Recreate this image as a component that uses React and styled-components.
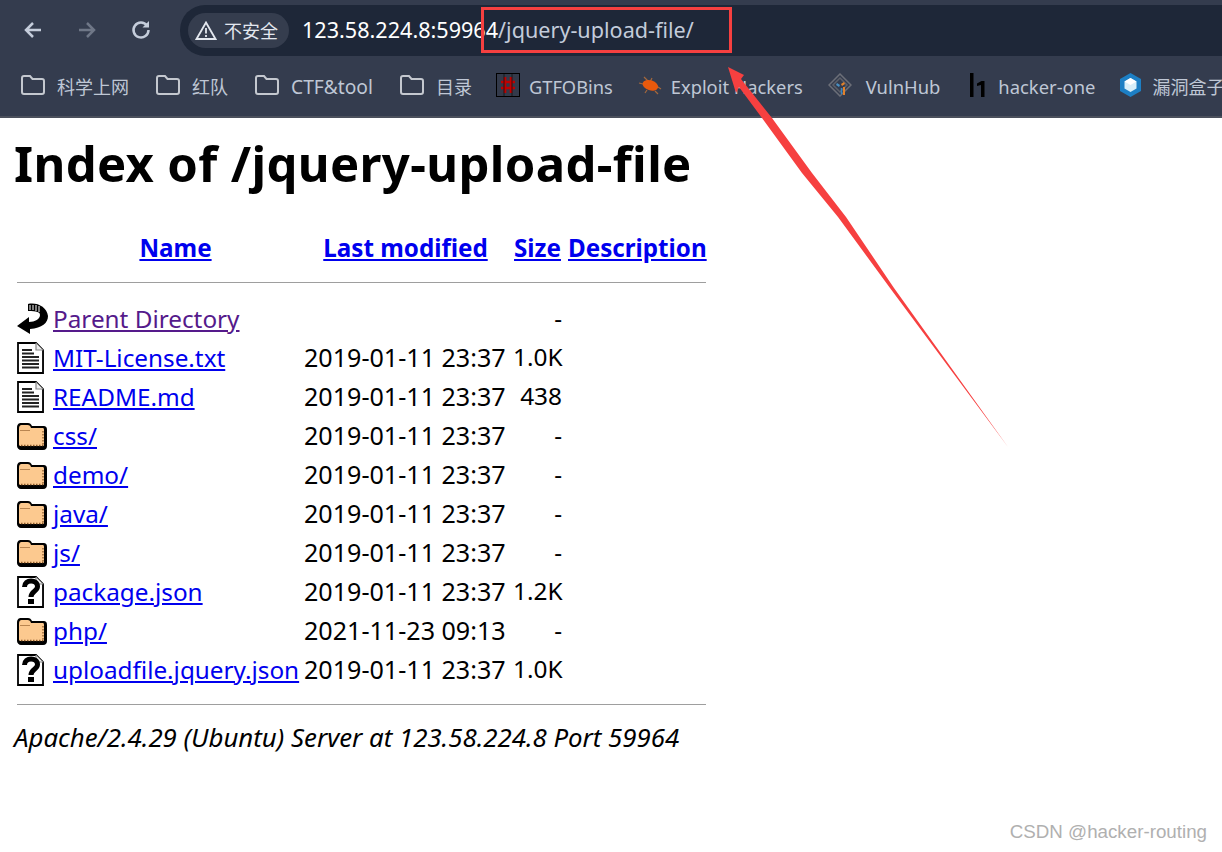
import React from 'react'
import styled, { createGlobalStyle } from 'styled-components'

const sans = '"Noto Sans", "Noto Sans CJK SC", "Open Sans", sans-serif'

const GlobalStyle = createGlobalStyle`
    html, body {
        margin: 0;
        padding: 0;
        background: #fff;
        font-family: ${sans};
    }
`

const Page = styled.div`
    position: relative;
    width: 1222px;
    height: 852px;
    overflow: hidden;
    background: #fff;
`

const Toolbar = styled.div`
    display: flex;
    align-items: stretch;
    height: 56px;
    padding-top: 5px;
    box-sizing: border-box;
    background: #343c4e;
`

const NavButtons = styled.div`
    display: flex;
    align-items: center;
    gap: 36px;
    width: 180px;
    padding: 0 0 1px 24px;
    box-sizing: border-box;
    flex-shrink: 0;
`

const NavIcon = styled.svg`
    width: 18px;
    height: 18px;
    fill: none;
    overflow: visible;
    stroke: ${p => (p.$disabled ? '#6f7787' : '#c5cddb')};
    stroke-width: 2.5;
`

const UrlBar = styled.div`
    flex: 1;
    display: flex;
    align-items: center;
    padding-left: 8px;
    background: #1e2738;
    border-radius: 25px 0 0 25px;
`

const SecurityPill = styled.div`
    display: flex;
    align-items: center;
    gap: 7px;
    height: 35px;
    width: 101px;
    padding-left: 7px;
    box-sizing: border-box;
    background: #353d4e;
    border-radius: 18px;
    color: #e3e7ee;
    font-size: 18px;
    white-space: nowrap;
`

const PillText = styled.span`
    padding-bottom: 2px;
`

const Url = styled.div`
    margin-left: 13px;
    padding-bottom: 2px;
    font-size: 21.6px;
    color: #c3ccdb;
    white-space: nowrap;
    b {
        font-weight: 400;
        color: #fff;
    }
`

const BookmarkBar = styled.div`
    display: flex;
    align-items: center;
    gap: 27px;
    height: 62px;
    padding: 0 0 2px 21px;
    box-sizing: border-box;
    background: #343c4e;
    border-bottom: 2px solid #4b505c;
    overflow: hidden;
`

const Bookmark = styled.div`
    display: flex;
    align-items: center;
    gap: ${p => p.$gap || 12}px;
    margin-left: ${p => p.$nudge || 0}px;
    flex-shrink: 0;
    color: #bfc7d5;
    font-size: ${p => p.$size || 18}px;
    white-space: nowrap;
`

const BookmarkLabel = styled.span`
    padding-top: 2px;
`

const Content = styled.div`
    color: #000;
`

const Title = styled.h1`
    margin: 0;
    padding: 12px 0 31px 14px;
    font-size: 49px;
    line-height: 66px;
    letter-spacing: 0.36px;
    font-weight: 700;
    white-space: nowrap;
`

const Listing = styled.table`
    margin-left: 14px;
    width: 698px;
    table-layout: fixed;
    border-collapse: collapse;
    font-size: 25.1px;
    white-space: nowrap;
    th, td {
        padding: 0 6px 0 0;
        height: 39px;
    }
    a {
        color: #0000ee;
        text-decoration: underline;
        font-size: 24.3px;
    }
`

const HeadLink = styled.a`
    font-weight: 700;
    && {
        font-size: 24.2px;
    }
`

const DirLink = styled.a`
    && {
        color: #551a8b;
    }
`

const IconCell = styled.td`
    && {
        height: 37px;
        padding: 2px 0 0 3px;
        line-height: 0;
    }
`

const SizeCell = styled.td`
    text-align: right;
    font-size: 24.4px;
`

const RuleCell = styled.th`
    && {
        height: ${p => p.$height}px;
        padding: 0 6px 0 3px;
    }
`

const Rule = styled.hr`
    margin: 0;
    border: 0;
    border-top: 1px solid #9e9e9e;
`

const Signature = styled.address`
    margin: 0;
    padding: 0 0 0 14px;
    font-size: 25.8px;
    line-height: 34px;
    white-space: nowrap;
`

const Watermark = styled.div`
    position: absolute;
    right: 15px;
    bottom: 9px;
    font-family: "Liberation Sans", sans-serif;
    font-size: 18.75px;
    color: #b0b0b0;
`

const Marker = styled.div`
    position: absolute;
    left: 481px;
    top: 7px;
    width: 251px;
    height: 46px;
    box-sizing: border-box;
    border: 3px solid #f64040;
`

const ArrowLayer = styled.svg`
    position: absolute;
    left: 0;
    top: 0;
    width: 1222px;
    height: 852px;
    pointer-events: none;
`

const FolderOutline = () => (
    <svg width="24" height="20" viewBox="0 0 24 20" fill="none" stroke="#c4c8cf" strokeWidth="2">
        <path d="M1 3C1 2 1.600 1 3 1H9l2.500 3H21c1.200 0 2 .8 2 2V17c0 1.200-.8 2-2 2H3C1.800 19 1 18.200 1 17Z" />
    </svg>
)

const GtfoIcon = () => (
    <svg width="24" height="24" viewBox="0 0 24 24">
        <rect x="0.500" y="0.500" width="23" height="23" fill="#333a4a" stroke="#000" />
        <path d="M5 9h14M5 15h14M9 4v16M15 4v16" stroke="#c00000" strokeWidth="2.600" />
        <path d="M8 1v22M16 1v22" stroke="#111" strokeWidth="0.800" />
    </svg>
)

const ExploitIcon = () => (
    <svg width="24" height="20" viewBox="0 0 24 20">
        <path d="M1 8l8 2M6 2l5 5M14 3l-2 4M17 16l3 3M9 15l-2 3M20 12l3 2" stroke="#a5683c" strokeWidth="1.200" />
        <ellipse cx="12.500" cy="10.500" rx="8" ry="5" fill="#e8590c" transform="rotate(18 13 10)" />
    </svg>
)

const VulnIcon = () => (
    <svg width="24" height="24" viewBox="0 0 24 24" fill="none">
        <path d="M12 1L23 12 12 23 1 12Z" stroke="#6c6f78" strokeWidth="1.500" />
        <path d="M12 5L19 12 12 19 5 12Z" stroke="#5d6069" strokeWidth="1.500" />
        <path d="M13 11l3-2 1 2-3 2Z" fill="#e2812b" />
        <path d="M9 10l3 2-1 2-3-2Z" fill="#4a90c2" />
        <path d="M16 14v8" stroke="#e2812b" strokeWidth="2" />
        <path d="M13.500 15v6" stroke="#3a87c0" strokeWidth="1.500" />
    </svg>
)

const HackerOneIcon = () => (
    <svg width="15" height="24" viewBox="0 0 15 24">
        <path d="M0 0h3.500v24H0ZM7 10.500l4.500-2.500h3v16h-3.500V12l-4 1Z" fill="#000" />
    </svg>
)

const BoxIcon = () => (
    <svg width="21" height="24" viewBox="0 0 21 24">
        <path d="M10.500 0L21 6v12l-10.500 6L0 18V6Z" fill="#1d7fc4" />
        <path d="M10.500 5l6 3.500v7l-6 3.500-6-3.500v-7Z" fill="#d8eef8" />
        <path d="M10.500 5l6 3.500-6 3.500-6-3.500Z" fill="#fff" />
    </svg>
)

const bookmarks = [
    { label: '科学上网', icon: <FolderOutline /> },
    { label: '红队', icon: <FolderOutline /> },
    { label: 'CTF&tool', icon: <FolderOutline />, size: 19.2 },
    { label: '目录', icon: <FolderOutline /> },
    { label: 'GTFOBins', icon: <GtfoIcon />, gap: 9, nudge: -3, size: 18.3 },
    { label: 'Exploit Hackers', icon: <ExploitIcon />, gap: 9, nudge: -2, size: 18.3 },
    { label: 'VulnHub', icon: <VulnIcon />, gap: 14, nudge: -2, size: 18.4 },
    { label: 'hacker-one', icon: <HackerOneIcon />, gap: 13, nudge: 3, size: 18.4 },
    { label: '漏洞盒子', icon: <BoxIcon />, gap: 11, nudge: -2 },
]

const BackIcon = () => (
    <svg width="31" height="31" viewBox="0 0 31 31">
        <path d="M11 1C20-1 30 4 31 13 31 20 25 25 13 26v5L0 23 12 14v5C18 19 23 16 23 12 23 9 20 8 11 8Z" fill="#000" />
        <path d="M13 2v5M16 2v5M19 2v6M22 3v6" stroke="#fff" strokeWidth="1" />
    </svg>
)

const DocSheet = () => (
    <>
        <path d="M27 9v23H3" fill="none" stroke="#666" strokeWidth="1.500" />
        <path d="M1 1h18l7 7v23H1Z" fill="#fff" stroke="#000" strokeWidth="1.800" />
        <path d="M19 1v7h7" fill="#eee" stroke="#888" strokeWidth="1.200" />
    </>
)

const TextIcon = () => (
    <svg width="27" height="32" viewBox="0 0 27 32">
        <DocSheet />
        <path d="M5 8h10M5 11.500h12M5 15h17M5 18.500h17M5 22h17M5 25.500h17" stroke="#222" strokeWidth="2.200" />
    </svg>
)

const UnknownIcon = () => (
    <svg width="27" height="32" viewBox="0 0 27 32">
        <DocSheet />
        <path d="M7.500 11C7.500 3 20.500 3 20.500 10.500 20.500 15.500 14 15 14 21" fill="none" stroke="#000" strokeWidth="5" />
        <rect x="11" y="23" width="6" height="5" fill="#000" />
    </svg>
)

const FolderIcon = () => (
    <svg width="30" height="28" viewBox="0 0 30 28">
        <path d="M0 6c0-4 2-5 4-5h7c2 0 3 1 4 3h11c3 0 4 1 4 4v16c0 2-1 4-4 4H4c-2 0-4-2-4-4Z" fill="#000" />
        <path d="M2 7c0-3 1-4 2.500-4h6c2 0 3 1 3.500 3h11.500c1 0 1.500.5 1.500 2v14.500c0 1-.5 1.500-1.500 1.500H4c-1 0-2-.5-2-1.500Z" fill="#fcc98f" />
        <path d="M3 8.500h10" stroke="#b98550" strokeWidth="1" />
        <path d="M4 23.500h22M26 9v14" stroke="#8a5a2b" strokeWidth="1.300" strokeDasharray="1.500 1.500" />
    </svg>
)

const files = [
    { name: 'MIT-License.txt', date: '2019-01-11 23:37', size: '1.0K', Icon: TextIcon },
    { name: 'README.md', date: '2019-01-11 23:37', size: '438', Icon: TextIcon },
    { name: 'css/', date: '2019-01-11 23:37', size: '-', Icon: FolderIcon },
    { name: 'demo/', date: '2019-01-11 23:37', size: '-', Icon: FolderIcon },
    { name: 'java/', date: '2019-01-11 23:37', size: '-', Icon: FolderIcon },
    { name: 'js/', date: '2019-01-11 23:37', size: '-', Icon: FolderIcon },
    { name: 'package.json', date: '2019-01-11 23:37', size: '1.2K', Icon: UnknownIcon },
    { name: 'php/', date: '2021-11-23 09:13', size: '-', Icon: FolderIcon },
    { name: 'uploadfile.jquery.json', date: '2019-01-11 23:37', size: '1.0K', Icon: UnknownIcon },
]

function App() {
    return (
        <Page>
            <GlobalStyle />
            <Toolbar>
                <NavButtons>
                    <NavIcon viewBox="0 0 18 18"><path d="M17 9H2M9 2L2 9l7 7" /></NavIcon>
                    <NavIcon viewBox="0 0 18 18" $disabled><path d="M1 9h15M9 2l7 7-7 7" /></NavIcon>
                    <NavIcon viewBox="0 0 18 18"><path d="M15 4.500A7.500 7.500 0 1 0 16.500 9" /><path d="M17 0v6.500h-6.500Z" fill="#c5cddb" stroke="none" /></NavIcon>
                </NavButtons>
                <UrlBar>
                    <SecurityPill>
                        <svg width="22" height="19" viewBox="0 0 22 19" fill="none">
                            <path d="M11 1.500L20.500 18H1.500Z" stroke="#e3e7ee" strokeWidth="1.800" />
                            <path d="M11 7v5.500M11 14v2" stroke="#e3e7ee" strokeWidth="1.800" />
                        </svg>
                        <PillText>不安全</PillText>
                    </SecurityPill>
                    <Url><b>123.58.224.8:59964</b>/jquery-upload-file/</Url>
                </UrlBar>
            </Toolbar>
            <BookmarkBar>
                {bookmarks.map(b => (
                    <Bookmark key={b.label} $gap={b.gap} $nudge={b.nudge} $size={b.size}>
                        {b.icon}
                        <BookmarkLabel>{b.label}</BookmarkLabel>
                    </Bookmark>
                ))}
            </BookmarkBar>
            <Content>
                <Title>Index of /jquery-upload-file</Title>
                <Listing>
                    <colgroup>
                        <col style={{ width: 39 }} />
                        <col style={{ width: 251 }} />
                        <col style={{ width: 209 }} />
                        <col style={{ width: 55 }} />
                        <col />
                    </colgroup>
                    <thead>
                        <tr>
                            <th></th>
                            <th><HeadLink href="#">Name</HeadLink></th>
                            <th><HeadLink href="#">Last modified</HeadLink></th>
                            <th><HeadLink href="#">Size</HeadLink></th>
                            <th><HeadLink href="#">Description</HeadLink></th>
                        </tr>
                        <tr><RuleCell colSpan="5" $height={32}><Rule /></RuleCell></tr>
                    </thead>
                    <tbody>
                        <tr>
                            <IconCell><BackIcon /></IconCell>
                            <td><DirLink href="#">Parent Directory</DirLink></td>
                            <td></td>
                            <SizeCell>-</SizeCell>
                            <td></td>
                        </tr>
                        {files.map(f => (
                            <tr key={f.name}>
                                <IconCell><f.Icon /></IconCell>
                                <td><a href="#">{f.name}</a></td>
                                <td>{f.date}</td>
                                <SizeCell>{f.size}</SizeCell>
                                <td></td>
                            </tr>
                        ))}
                        <tr><RuleCell colSpan="5" $height={32}><Rule /></RuleCell></tr>
                    </tbody>
                </Listing>
                <Signature>Apache/2.4.29 (Ubuntu) Server at 123.58.224.8 Port 59964</Signature>
            </Content>
            <Marker />
            <ArrowLayer viewBox="0 0 1222 852">
                <path d="M728 67L744 75 741 79 772 118 812 173 846 217 894 288 1008 447 890 288 838 217 802 173 762 118 739 87 736 93Z" fill="#f64040" />
            </ArrowLayer>
            <Watermark>CSDN @hacker-routing</Watermark>
        </Page>
    )
}

export default App
